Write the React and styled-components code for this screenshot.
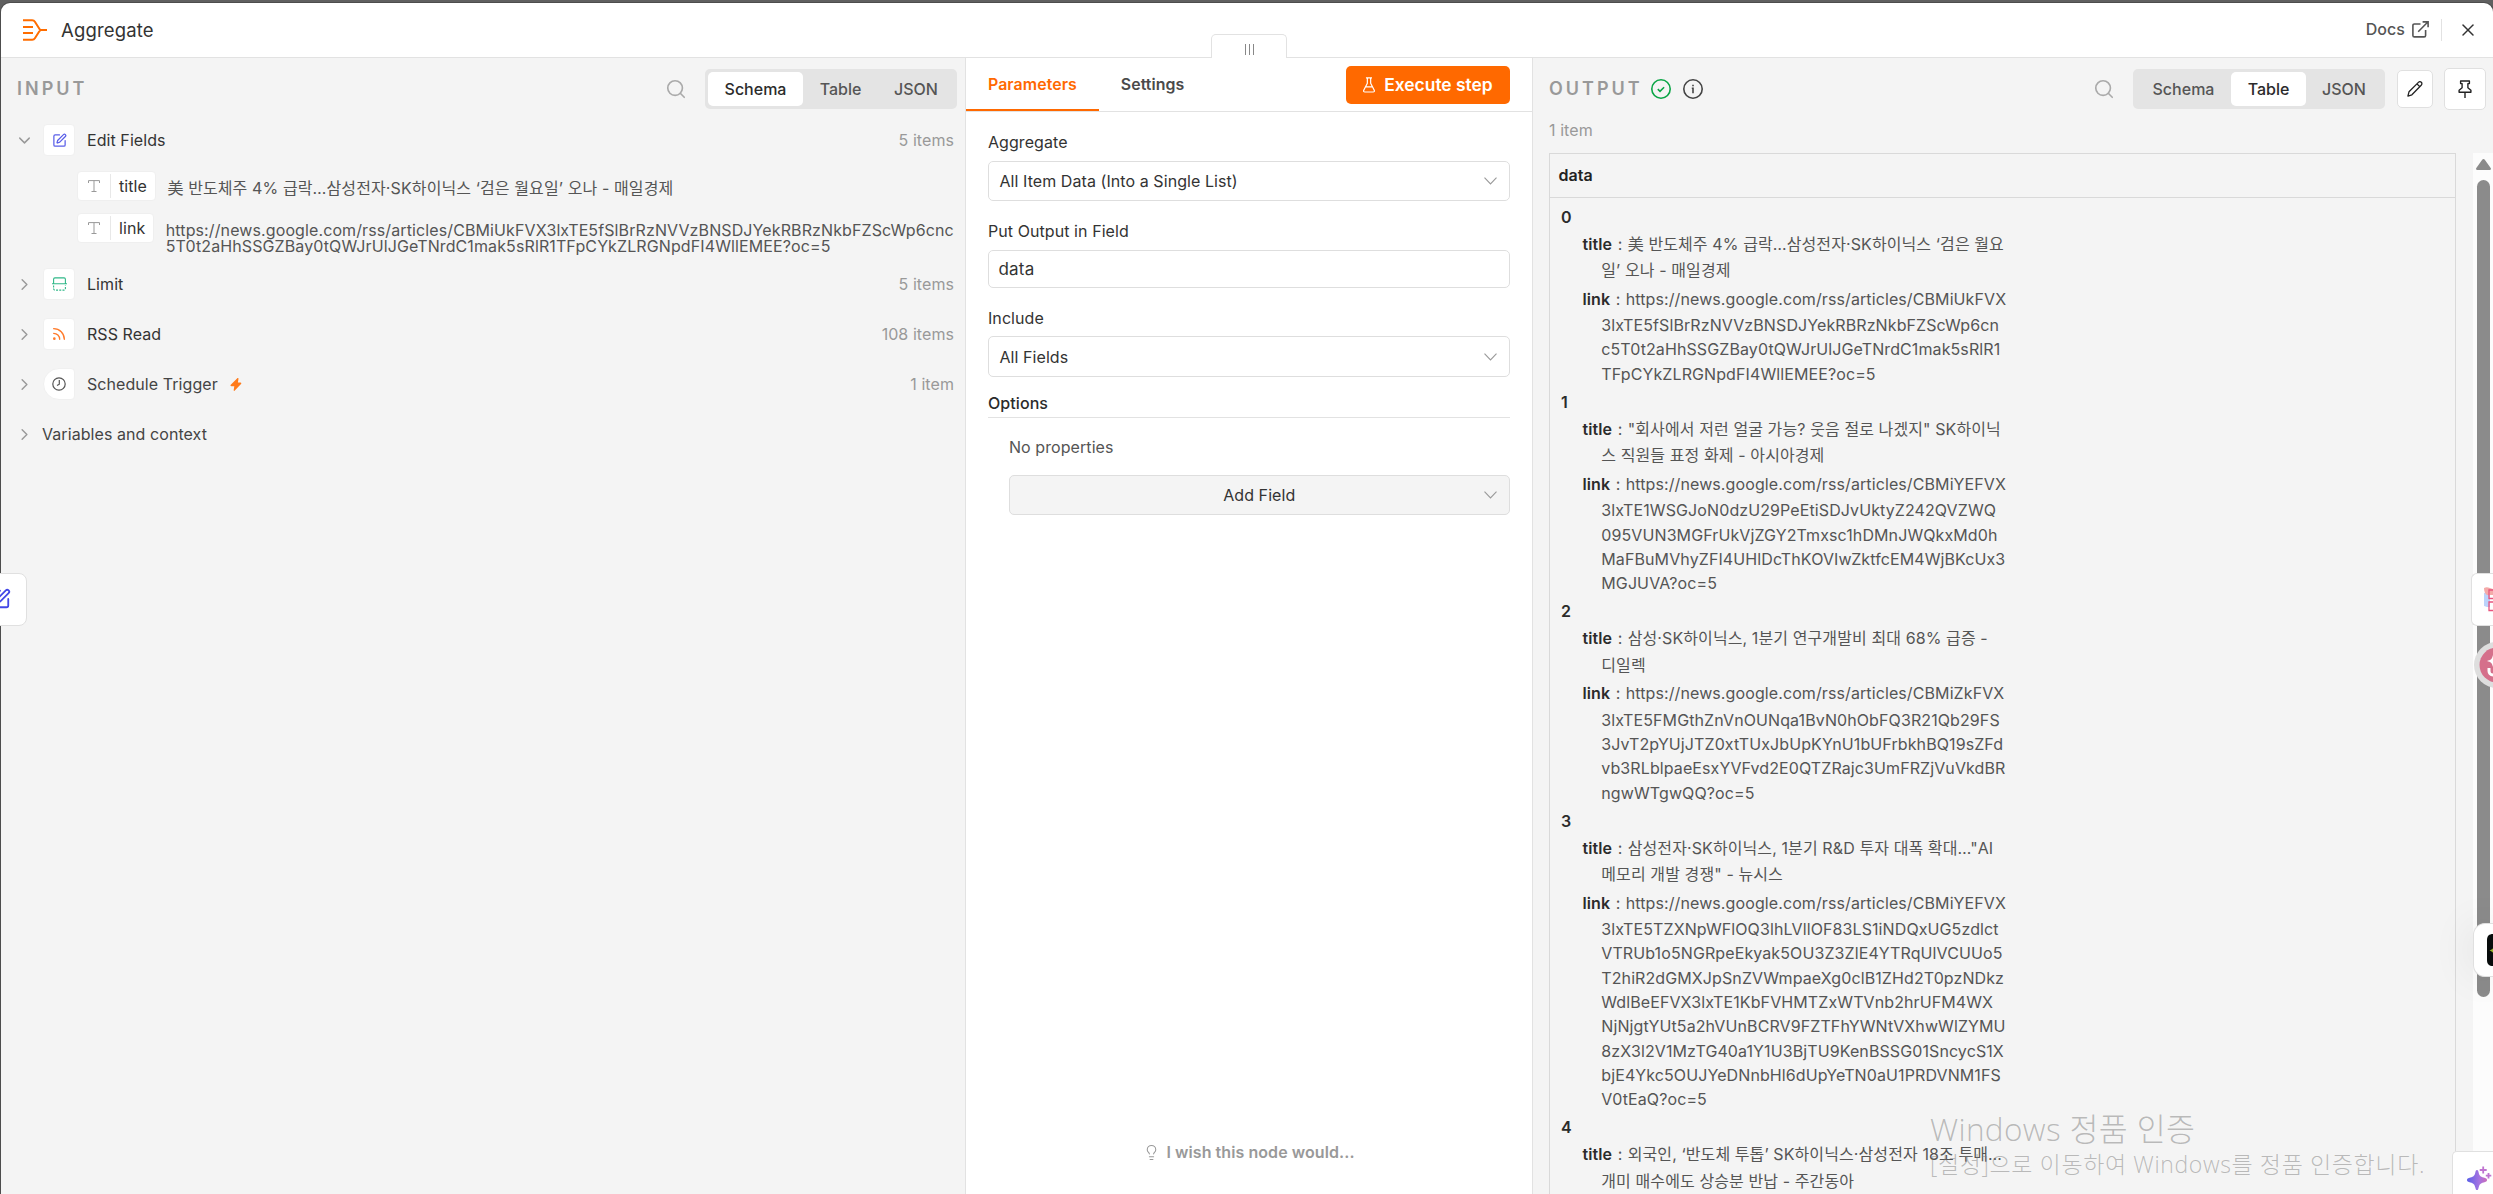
import React from 'react'
import styled, { createGlobalStyle, css } from 'styled-components'
import { Search, SquarePen, Rss, X, ChevronDown, ChevronRight, Lightbulb } from 'lucide-react'

const GlobalStyle = createGlobalStyle`
  * {
    box-sizing: border-box;
  }
  body {
    margin: 0;
    height: 1194px;
    overflow: hidden;
    background: #606060;
    color: #333;
    font-family: Inter, 'Noto Sans CJK KR', sans-serif;
    font-size: 16px;
    line-height: 20px;
    letter-spacing: 0.07px;
  }
  button {
    font: inherit;
    color: inherit;
  }
  svg {
    display: block;
    flex: none;
  }
`

const Modal = styled.div`
  display: flex;
  flex-direction: column;
  height: 1191px;
  margin: 3px 0 0 1px;
  border-radius: 9px 9px 0 0;
  background: #fff;
  overflow: hidden;
  box-shadow: 0 0 0 1px #4d4d4d;
`

const Header = styled.header`
  display: flex;
  align-items: center;
  flex: none;
  height: 55px;
  padding: 0 15px 0 22px;
  border-bottom: 1px solid #e2e2e2;
`

const NodeName = styled.h1`
  margin: 0 auto 1px 14px;
  font-size: 18.5px;
  font-weight: 400;
  letter-spacing: 0.15px;
`

const DocsLink = styled.a`
  display: flex;
  align-items: center;
  gap: 7px;
  padding: 0 12px 2px 0;
  margin-right: 16px;
  font-weight: 500;
  color: #555;
  height: 22px;
  border-right: 1px solid #e2e2e2;
`

const Columns = styled.div`
  display: grid;
  grid-template-columns: 964px 568px 1fr;
  flex: 1;
  min-height: 0;
`

const Side = styled.section`
  display: flex;
  flex-direction: column;
  min-width: 0;
  background: #f4f4f4;
`

const SideHead = styled.div`
  display: flex;
  align-items: center;
  flex: none;
  height: 62px;
  padding: 0 ${ ({ $output }) => $output ? 7 : 8 }px 0 16px;
`

const SideTitle = styled.h2`
  margin: 0 11px 0 0;
  font-size: 18px;
  font-weight: 600;
  letter-spacing: 3px;
  color: #999;
`

const Status = styled.div`
  display: flex;
  gap: 12px;
  margin: 0 auto 0 -3px;
`

const SearchIcon = styled(Search)`
  margin-left: auto;
  color: #aaa;
`

const Views = styled.div`
  display: flex;
  height: 40px;
  margin-left: 18px;
  padding: 3px;
  border-radius: 5px;
  background: #e4e4e4;
`

const View = styled.button`
  width: ${ ({ $width }) => $width }px;
  padding: 0;
  border: 0;
  border-radius: 5px;
  background: ${ ({ $active }) => $active ? '#fff' : 'transparent' };
  color: ${ ({ $active }) => $active ? '#2b2b2b' : '#555' };
  font-weight: 500;
`

const IconButton = styled.button`
  display: flex;
  align-items: center;
  justify-content: center;
  width: ${ ({ $w }) => $w }px;
  height: ${ ({ $h }) => $h }px;
  margin-left: ${ ({ $gap }) => $gap }px;
  padding: 0;
  border: 1px solid #e0e0e0;
  border-radius: 5px;
  background: #fff;
`

const Schema = styled.div`
  display: flex;
  flex-direction: column;
  padding: 0 11px 0 14px;
`

const SchemaNode = styled.div`
  display: flex;
  align-items: center;
  height: ${ ({ $h }) => $h || 50 }px;
  color: ${ ({ $muted }) => $muted ? '#444' : '#333' };

  > svg:first-child {
    margin-right: ${ ({ $plain }) => $plain ? 8 : 9 }px;
    color: #999;
  }
`

const NodeIcon = styled.span`
  display: flex;
  align-items: center;
  justify-content: center;
  width: 32px;
  height: 32px;
  margin-right: 12px;
  border: 1px solid #f0f0f0;
  border-radius: ${ ({ $trigger }) => $trigger ? '16px 4px 4px 16px' : '4px' };
  background: #fff;
`

const NodeLabel = styled.span`
  margin-right: 12px;
`

const Count = styled.span`
  margin-left: auto;
  color: #999;
`

const Fields = styled.div`
  display: flex;
  flex-direction: column;
  gap: 12px;
  height: 99px;
  padding: 11px 0 0 62px;
`

const Field = styled.div`
  display: flex;
  align-items: flex-start;
  height: 30px;
  gap: 12px;
`

const Pill = styled.span`
  display: flex;
  align-items: center;
  flex: none;
  height: 30px;
  padding: 0 8px 0 10px;
  border: 1px solid #efefef;
  border-radius: 4px;
  background: #fff;
`

const PillName = styled.span`
  margin-left: 10px;
  padding-left: 8px;
  border-left: 1px solid #e8e8e8;
  line-height: 24px;
`

const FieldValue = styled.span`
  margin-left: -0.5px;
  padding-top: ${ ({ $top }) => $top }px;
  line-height: 16px;
  letter-spacing: 0.11px;
  white-space: nowrap;
  color: #555;
`

const Center = styled.section`
  display: flex;
  flex-direction: column;
  min-width: 0;
  border: solid #e2e2e2;
  border-width: 0 1px;
  background: #fff;
`

const Handle = styled.div`
  position: absolute;
  left: 1211px;
  top: 34px;
  display: flex;
  justify-content: center;
  gap: 3px;
  width: 76px;
  height: 24px;
  padding-top: 9px;
  border: 1px solid #e2e2e2;
  border-bottom: 0;
  border-radius: 5px 5px 0 0;
  background: #fff;
`

const Bar = styled.i`
  width: 1px;
  height: 11px;
  background: #888;
`

const Tabs = styled.nav`
  display: flex;
  flex: none;
  height: 54px;
  border-bottom: 1px solid #e2e2e2;
  padding-right: 22px;
`

const Tab = styled.a`
  padding: 17px 22px 0;
  height: 53px;
  font-weight: 600;
  font-size: 15.9px;
  color: ${ ({ $active }) => $active ? '#ff6900' : '#4a4a4a' };
  ${ ({ $active }) => $active && css`
    border-bottom: 2px solid #ff6900;
  ` }
`

const Execute = styled.button`
  display: flex;
  align-items: center;
  justify-content: center;
  gap: 9px;
  width: 164px;
  height: 38px;
  margin: 8px 0 0 auto;
  padding: 0;
  border: 0;
  border-radius: 5px;
  background: #ff6900;
  color: #fff;
  font-size: 17.4px;
  font-weight: 600;
`

const Form = styled.div`
  display: flex;
  flex-direction: column;
  flex: 1;
  padding: 20px 22px 34px;
`

const Label = styled.label`
  height: 20px;
  margin-bottom: ${ ({ $gap }) => $gap }px;
`

const Control = styled.div`
  display: flex;
  align-items: center;
  justify-content: space-between;
  height: ${ ({ $h }) => $h }px;
  margin-bottom: ${ ({ $gap }) => $gap }px;
  padding: 0 12px 0 10.5px;
  border: 1px solid #dedede;
  border-radius: 5px;

  svg {
    color: #999;
  }
`

const TextInput = styled(Control)`
  padding-left: 9.5px;
  font-size: 17px;
  letter-spacing: 0.2px;
`

const OptionsTitle = styled.div`
  height: 25px;
  border-bottom: 1px solid #e2e2e2;
  font-weight: 500;
  color: #2b2b2b;
`

const Options = styled.div`
  display: flex;
  flex-direction: column;
  gap: 18px;
  padding: 19px 0 0 21px;
  color: #555;
`

const AddField = styled(Control)`
  background: #f4f4f4;
  color: #333;

  span {
    flex: 1;
    padding-left: 14px;
    text-align: center;
  }
`

const Wish = styled.div`
  display: flex;
  align-items: center;
  justify-content: center;
  gap: 6px;
  margin-top: auto;
  color: #999;
  font-weight: 600;
`

const ItemCount = styled.div`
  height: 33px;
  padding: 0 0 0 16px;
  color: #999;
`

const TableArea = styled.div`
  display: flex;
  flex: 1;
  min-height: 0;
  padding-left: 16px;
`

const DataTable = styled.div`
  width: 907px;
  margin-right: 17px;
  border: 1px solid #d9d9d9;
  border-bottom: 0;
  overflow: hidden;
`

const ColumnName = styled.div`
  height: 44px;
  padding: 11px 8.5px;
  border-bottom: 1px solid #d9d9d9;
  font-weight: 600;
  color: #222;
`

const Cell = styled.div`
  padding: 5px 0 0 11px;
  color: #555;
`

const Index = styled.div`
  height: 28px;
  line-height: 28px;
  font-weight: 600;
  color: #2b2b2b;
`

const Property = styled.div`
  margin: 0 0 2px 21.5px;
  white-space: nowrap;
  letter-spacing: 0.1px;
`

const PropertyName = styled.b`
  margin-right: 1px;
  font-weight: 600;
  color: #2b2b2b;
`

const Colon = styled.span`
  margin-right: 0.6px;
`

const Line = styled.div`
  height: ${ ({ $h }) => $h }px;
  line-height: ${ ({ $h }) => $h }px;
  padding-left: ${ ({ $hang }) => $hang ? 18.8 : 0 }px;
`

const ScrollTrack = styled.div`
  display: flex;
  flex-direction: column;
  align-items: center;
  width: 20px;
  padding: 6px 0 0 1px;
  background: #fcfcfc;
`

const ScrollThumb = styled.div`
  width: 13px;
  height: 817px;
  margin-top: 10px;
  border-radius: 7px;
  background: #8b8b8b;
`

const Floating = styled.div`
  position: absolute;
  display: flex;
  align-items: center;
  overflow: hidden;
  background: #fff;
  border: 1px solid #e0e0e0;
`

const PreviousNode = styled(Floating)`
  left: -1px;
  top: 573px;
  width: 28px;
  height: 53px;
  border-radius: 0 8px 8px 0;

  svg {
    margin: -1px 0 0 -11px;
  }
`

const NextNode = styled(Floating)`
  right: 0;
  top: 573px;
  width: 22px;
  height: 53px;
  padding-left: 12px;
  border-right: 0;
  border-radius: 6px 0 0 6px;
`

const Recorder = styled(Floating)`
  right: 0;
  top: 642px;
  width: 19px;
  height: 46px;
  border: 0;
  background: none;
`

const Assistant = styled(Floating)`
  right: 0;
  top: 923px;
  width: 20px;
  height: 54px;
  padding-left: 13px;
  border-right: 0;
  border-radius: 12px 0 0 12px;
  box-shadow: 0 0 40px rgba(0, 0, 0, 0.1);
`

const AskAi = styled(Floating)`
  right: 0;
  bottom: 0;
  width: 41px;
  height: 43px;
  padding: 14px 0 0 14px;
  align-items: flex-start;
  border-width: 1px 0 0 1px;
  border-radius: 5px 0 0 0;
`

const Watermark = styled.div`
  position: absolute;
  left: 1930px;
  top: 1108px;
  color: rgba(120, 120, 120, 0.48);
  font-family: 'Open Sans', 'Noto Sans CJK KR', sans-serif;
  font-weight: 300;
  white-space: nowrap;
`

const WatermarkTitle = styled.div`
  font-size: 31.5px;
  line-height: 42px;
  letter-spacing: 0.35px;
`

const WatermarkText = styled.div`
  font-size: 23px;
  line-height: 29px;
  letter-spacing: 0.62px;
`

const AggregateIcon = () => (
  <svg width="24" height="22" viewBox="0 0 24 22" fill="none" stroke="#ff6d00" strokeWidth="2">
    <path d="M0 1.2h9.2c1.2 0 2.1.5 2.7 1.5l4.6 7.3c.4.7.9 1 1.7 1H24M0 20.8h9.2c1.2 0 2.1-.5 2.7-1.5l4.6-7.3c.4-.7.9-1 1.7-1M0 7.9h10M0 14.1h10" />
  </svg>
)

const ExternalIcon = () => (
  <svg width="17" height="17" viewBox="0 0 17 17" fill="none" stroke="#555" strokeWidth="1.6">
    <path d="M8.5 3H2.4C1.4 3 .9 3.5.9 4.5v9.9c0 1 .5 1.5 1.5 1.5h9.7c1 0 1.5-.5 1.5-1.5V9M6.2 10.8 15.8 1M10.6.9h5.5v5.4" />
  </svg>
)

const FlaskIcon = () => (
  <svg width="12" height="16" viewBox="0 0 13 17" fill="none" stroke="currentColor" strokeWidth="1.3" strokeLinejoin="round">
    <path d="M3.2.8h6.6M4.7.8v5.8L.8 14.2c-.4 1 .1 1.9 1.2 1.9h9c1.1 0 1.6-.9 1.2-1.9L8.3 6.6V.8M2.9 10.6h7.2" />
  </svg>
)

const TypeIcon = () => (
  <svg width="12" height="12" viewBox="0 0 12 12" fill="none" stroke="#999" strokeWidth="1">
    <path d="M.5 3V.6h11V3M6 .6v10.9M3.5 11.5h5" />
  </svg>
)

const LimitIcon = () => (
  <svg width="15" height="14" viewBox="0 0 15 14" fill="none" stroke="#2fb888" strokeWidth="1.1">
    <path d="M0 6.8h15M1.6 6.8V2.2c0-.9.4-1.3 1.3-1.3h9.2c.9 0 1.3.4 1.3 1.3v4.6" />
    <path d="M1.6 8.4v3.4c0 .9.4 1.3 1.3 1.3h9.2c.9 0 1.3-.4 1.3-1.3V8.4" strokeDasharray="2 1.2" />
  </svg>
)

const ClockIcon = () => (
  <svg width="14" height="14" viewBox="0 0 14 14" fill="none" stroke="#555" strokeWidth="1.2">
    <circle cx="7" cy="7" r="6.2" />
    <path d="M7.3 3v4.2L5 8.6" />
  </svg>
)

const BoltIcon = () => (
  <svg width="12" height="13" viewBox="0 0 12 13" fill="#ff7a1a">
    <path d="M7.3.2 1 6.6c-.9.9-.6 1.7.5 1.7h2.8l-.6 3.8c-.1.8.6 1.1 1.1.5l6-6.3c.9-.9.6-1.7-.5-1.7H7.9l.6-3.8C8.5 0 7.8-.3 7.3.2z" />
  </svg>
)

const DownIcon = () => (
  <svg width="13" height="8" viewBox="0 0 13 8" fill="none" stroke="currentColor" strokeWidth="1.1">
    <path d="M.5.6l6 6.3 6-6.3" />
  </svg>
)

const CheckIcon = () => (
  <svg width="20" height="20" viewBox="0 0 20 20" fill="none" stroke="#0aa546" strokeWidth="1.6">
    <circle cx="10" cy="10" r="9.2" />
    <path d="M6.8 10.2l2.2 2.1 4.1-4.1" />
  </svg>
)

const InfoIcon = () => (
  <svg width="20" height="20" viewBox="0 0 20 20" fill="none" stroke="#444" strokeWidth="1.6">
    <circle cx="10" cy="10" r="9.2" />
    <path d="M8.8 9.2H10v5M10 5.7v1.6" />
  </svg>
)

const PencilIcon = () => (
  <svg width="16" height="16" viewBox="0 0 16 16" fill="none" stroke="#222" strokeWidth="1.3" strokeLinejoin="round">
    <path d="M.9 15.1l1.1-4.3L11.4 1.4c.9-.9 2.1-.9 2.9-.1.8.8.8 2-.1 2.9L4.9 13.8zM10 2.9l2.8 2.8" />
  </svg>
)

const PinIcon = () => (
  <svg width="14" height="18" viewBox="0 0 14 18" fill="none" stroke="#222" strokeWidth="1.4" strokeLinejoin="round">
    <path d="M2.6 1h8.8v2.6H9.9v4.2l3 2.5v1.9H1.1v-1.9l3-2.5V3.6H2.6zM7 12.2V18" />
  </svg>
)

const ScrollUpIcon = () => (
  <svg width="15" height="11" viewBox="0 0 15 11" fill="#8b8b8b">
    <path d="M6.2.8.3 8.9C-.3 9.9.2 11 1.3 11h12.4c1.1 0 1.6-1.1 1-2.1L8.8.8c-.7-1-1.9-1-2.6 0z" />
  </svg>
)

const SparkleIcon = () => (
  <svg width="25" height="25" viewBox="0 0 25 25" fill="url(#ask)">
    <defs>
      <linearGradient id="ask" x1="0" y1="0" x2="25" y2="0" gradientUnits="userSpaceOnUse">
        <stop stopColor="#5b60e8" />
        <stop offset="0.5" stopColor="#a773e0" />
        <stop offset="1" stopColor="#e0699f" />
      </linearGradient>
    </defs>
    <path d="M10 4c1 0 1.2.8 1.6 2.3.8 3.4 1.7 4.4 5 5.3 2.4.6 3.4 1 3.4 2.4s-1 1.8-3.4 2.4c-3.3.9-4.2 1.9-5 5.3C11.2 23.2 11 24 10 24s-1.2-.8-1.6-2.3c-.8-3.4-1.7-4.4-5-5.3C1 15.8 0 15.4 0 14s1-1.8 3.4-2.4c3.3-.9 4.2-1.9 5-5.3C8.8 4.8 9 4 10 4z" />
    <path d="M16.2.5v7M12.7 4h7M21.5 7v5.500M18.800 9.700h5.500" fill="none" stroke="#bf74d0" strokeWidth="1.8" />
  </svg>
)

const TranslateIcon = () => (
  <svg width="9" height="27" viewBox="0 0 9 27" fill="none">
    <path d="M0 7v13c2 1 4 1 6 1V5z" fill="#bcd3fb" />
    <path d="M0 2c3-2 6 0 9 1v6H3C1 8 0 5 0 2z" fill="#f4aaa8" />
    <path d="M9 4H5v8.5H9M9 16H5v8.5h4" stroke="#e8547e" strokeWidth="1.3" />
  </svg>
)

const RecorderIcon = () => (
  <svg width="19" height="46" viewBox="0 0 19 46">
    <circle cx="23" cy="23" r="23" fill="#dedede" />
    <circle cx="23" cy="23" r="17.5" fill="#d5708b" />
    <path d="M19 13c-1 4-2 5-6 6 4 1 5 2 6 6z" fill="#fff" />
    <path d="M15 26v3c0 2 1.5 4 4 4" fill="none" stroke="#fff" strokeWidth="3" />
  </svg>
)

const BotIcon = () => (
  <svg width="7" height="32" viewBox="0 0 7 32">
    <path d="M7 0H6C2 0 0 2 0 6v20c0 4 2 6 6 6h1z" fill="#080c0c" />
    <path d="M7 12c-1 3-2 3.5-4.5 4.5C5 17.5 6 18 7 21z" fill="#9bb52f" />
  </svg>
)

const views = [['Schema', 95], ['Table', 75], ['JSON', 76]]

const items = [
  {
    title: ['美 반도체주 4% 급락…삼성전자·SK하이닉스 ‘검은 월요', '일’ 오나 - 매일경제'],
    link: [
      'https://news.google.com/rss/articles/CBMiUkFVX',
      '3lxTE5fSlBrRzNVVzBNSDJYekRBRzNkbFZScWp6cn',
      'c5T0t2aHhSSGZBay0tQWJrUlJGeTNrdC1mak5sRlR1',
      'TFpCYkZLRGNpdFI4WllEMEE?oc=5',
    ],
  },
  {
    title: ['"회사에서 저런 얼굴 가능? 웃음 절로 나겠지" SK하이닉', '스 직원들 표정 화제 - 아시아경제'],
    link: [
      'https://news.google.com/rss/articles/CBMiYEFVX',
      '3lxTE1WSGJoN0dzU29PeEtiSDJvUktyZ242QVZWQ',
      '095VUN3MGFrUkVjZGY2Tmxsc1hDMnJWQkxMd0h',
      'MaFBuMVhyZFI4UHlDcThKOVIwZktfcEM4WjBKcUx3',
      'MGJUVA?oc=5',
    ],
  },
  {
    title: ['삼성·SK하이닉스, 1분기 연구개발비 최대 68% 급증 -', '디일렉'],
    link: [
      'https://news.google.com/rss/articles/CBMiZkFVX',
      '3lxTE5FMGthZnVnOUNqa1BvN0hObFQ3R21Qb29FS',
      '3JvT2pYUjJTZ0xtTUxJbUpKYnU1bUFrbkhBQ19sZFd',
      'vb3RLblpaeEsxYVFvd2E0QTZRajc3UmFRZjVuVkdBR',
      'ngwWTgwQQ?oc=5',
    ],
  },
  {
    title: ['삼성전자·SK하이닉스, 1분기 R&D 투자 대폭 확대…"AI', '메모리 개발 경쟁" - 뉴시스'],
    link: [
      'https://news.google.com/rss/articles/CBMiYEFVX',
      '3lxTE5TZXNpWFlOQ3lhLVllOF83LS1iNDQxUG5zdlct',
      'VTRUb1o5NGRpeEkyak5OU3Z3ZlE4YTRqUlVCUUo5',
      'T2hiR2dGMXJpSnZVWmpaeXg0clB1ZHd2T0pzNDkz',
      'WdlBeEFVX3lxTE1KbFVHMTZxWTVnb2hrUFM4WX',
      'NjNjgtYUt5a2hVUnBCRV9FZTFhYWNtVXhwWlZYMU',
      '8zX3l2V1MzTG40a1Y1U3BjTU9KenBSSG01SncycS1X',
      'bjE4Ykc5OUJYeDNnbHl6dUpYeTN0aU1PRDVNM1FS',
      'V0tEaQ?oc=5',
    ],
  },
  {
    title: ['외국인, ‘반도체 투톱’ SK하이닉스·삼성전자 18조 투매…', '개미 매수에도 상승분 반납 - 주간동아'],
    link: [],
  },
]

const ViewSwitch = ({ active }) => (
  <>
    <SearchIcon size={ 22 } strokeWidth={ 1.8 } />
    <Views>
      { views.map(([name, width]) => (
        <View key={ name } $width={ width } $active={ name === active }>{ name }</View>
      )) }
    </Views>
  </>
)

const PropertyLines = ({ name, lines, rest }) => (
  <Property>
    { lines.map((line, i) => (
      <Line key={ line } $h={ i === 0 ? 27.3 : rest } $hang={ i > 0 }>
        { i === 0 && <><PropertyName>{ name }</PropertyName> <Colon>:</Colon> </> }{ line }
      </Line>
    )) }
  </Property>
)

const InputPanel = () => (
  <Side>
    <SideHead>
      <SideTitle>INPUT</SideTitle>
      <ViewSwitch active="Schema" />
    </SideHead>
    <Schema>
      <SchemaNode $h={ 40 }>
        <ChevronDown size={ 19 } strokeWidth={ 1.8 } />
        <NodeIcon><SquarePen size={ 15 } color="#5a5fe8" /></NodeIcon>
        Edit Fields
        <Count>5 items</Count>
      </SchemaNode>
      <Fields>
        <Field>
          <Pill><TypeIcon /><PillName>title</PillName></Pill>
          <FieldValue $top={ 9 }>美 반도체주 4% 급락…삼성전자·SK하이닉스 ‘검은 월요일’ 오나 - 매일경제</FieldValue>
        </Field>
        <Field>
          <Pill><TypeIcon /><PillName>link</PillName></Pill>
          <FieldValue $top={ 9 }>
            https://news.google.com/rss/articles/CBMiUkFVX3lxTE5fSlBrRzNVVzBNSDJYekRBRzNkbFZScWp6cnc<br />
            5T0t2aHhSSGZBay0tQWJrUlJGeTNrdC1mak5sRlR1TFpCYkZLRGNpdFI4WllEMEE?oc=5
          </FieldValue>
        </Field>
      </Fields>
      <SchemaNode>
        <ChevronRight size={ 19 } strokeWidth={ 1.8 } />
        <NodeIcon><LimitIcon /></NodeIcon>
        Limit
        <Count>5 items</Count>
      </SchemaNode>
      <SchemaNode>
        <ChevronRight size={ 19 } strokeWidth={ 1.8 } />
        <NodeIcon><Rss size={ 16 } color="#ff7a2a" /></NodeIcon>
        RSS Read
        <Count>108 items</Count>
      </SchemaNode>
      <SchemaNode $muted>
        <ChevronRight size={ 19 } strokeWidth={ 1.8 } />
        <NodeIcon $trigger><ClockIcon /></NodeIcon>
        <NodeLabel>Schedule Trigger</NodeLabel>
        <BoltIcon />
        <Count>1 item</Count>
      </SchemaNode>
      <SchemaNode $muted $plain>
        <ChevronRight size={ 19 } strokeWidth={ 1.8 } />
        Variables and context
      </SchemaNode>
    </Schema>
  </Side>
)

const ParametersPanel = () => (
  <Center>
    <Tabs>
      <Tab $active>Parameters</Tab>
      <Tab>Settings</Tab>
      <Execute><FlaskIcon />Execute step</Execute>
    </Tabs>
    <Form>
      <Label $gap={ 9 }>Aggregate</Label>
      <Control $h={ 40 } $gap={ 20 }>All Item Data (Into a Single List)<DownIcon /></Control>
      <Label $gap={ 9 }>Put Output in Field</Label>
      <TextInput $h={ 38 } $gap={ 20 }>data</TextInput>
      <Label $gap={ 8 }>Include</Label>
      <Control $h={ 41 } $gap={ 16 }>All Fields<DownIcon /></Control>
      <OptionsTitle>Options</OptionsTitle>
      <Options>
        No properties
        <AddField $h={ 40 } $gap={ 0 }><span>Add Field</span><DownIcon /></AddField>
      </Options>
      <Wish><Lightbulb size={ 17 } strokeWidth={ 1.5 } />I wish this node would...</Wish>
    </Form>
  </Center>
)

const OutputPanel = () => (
  <Side>
    <SideHead $output>
      <SideTitle>OUTPUT</SideTitle>
      <Status>
        <CheckIcon />
        <InfoIcon />
      </Status>
      <ViewSwitch active="Table" />
      <IconButton $w={ 36 } $h={ 38 } $gap={ 12 }><PencilIcon /></IconButton>
      <IconButton $w={ 42 } $h={ 42 } $gap={ 11 }><PinIcon /></IconButton>
    </SideHead>
    <ItemCount>1 item</ItemCount>
    <TableArea>
      <DataTable>
        <ColumnName>data</ColumnName>
        <Cell>
          { items.map((item, i) => (
            <React.Fragment key={ i }>
              <Index>{ i }</Index>
              <PropertyLines name="title" lines={ item.title } rest={ 25.6 } />
              <PropertyLines name="link" lines={ item.link } rest={ 24.3 } />
            </React.Fragment>
          )) }
        </Cell>
      </DataTable>
      <ScrollTrack>
        <ScrollUpIcon />
        <ScrollThumb />
      </ScrollTrack>
    </TableArea>
  </Side>
)

const App = () => (
  <>
    <GlobalStyle />
    <Modal>
      <Header>
        <AggregateIcon />
        <NodeName>Aggregate</NodeName>
        <DocsLink>Docs<ExternalIcon /></DocsLink>
        <X size={ 20 } strokeWidth={ 1.8 } />
      </Header>
      <Columns>
        <InputPanel />
        <ParametersPanel />
        <OutputPanel />
      </Columns>
    </Modal>
    <Handle><Bar /><Bar /><Bar /></Handle>
    <PreviousNode>
      <SquarePen size={ 22 } color="#4347e6" />
    </PreviousNode>
    <NextNode><TranslateIcon /></NextNode>
    <Recorder><RecorderIcon /></Recorder>
    <Assistant><BotIcon /></Assistant>
    <AskAi><SparkleIcon /></AskAi>
    <Watermark>
      <WatermarkTitle>Windows 정품 인증</WatermarkTitle>
      <WatermarkText>[설정]으로 이동하여 Windows를 정품 인증합니다.</WatermarkText>
    </Watermark>
  </>
)

export default App
